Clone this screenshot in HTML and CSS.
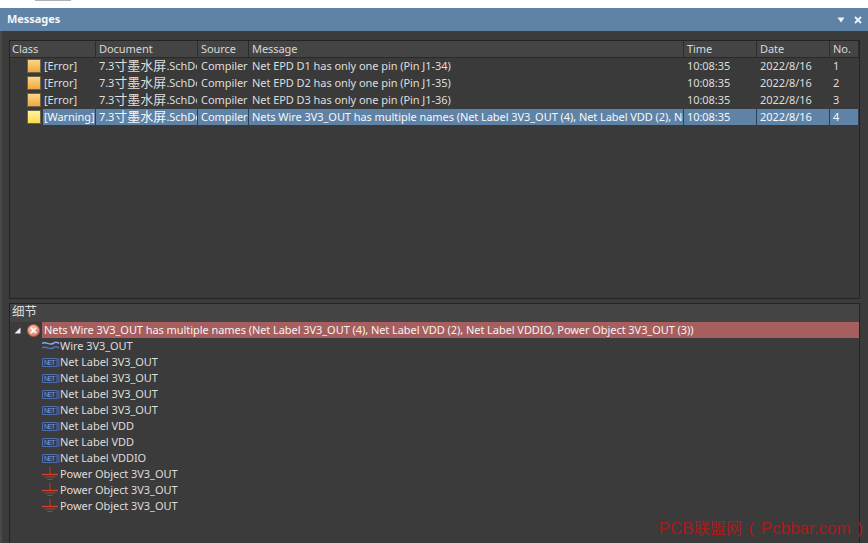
FILE: index.html
```html
<!DOCTYPE html>
<html lang="zh">
<head>
<meta charset="utf-8">
<title>Messages</title>
<link rel="stylesheet" href="styles.css">
</head>
<body>
<div class="topstrip"><i class="scrap"></i></div>
<header class="titlebar">
  <span class="title">Messages</span>
  <span class="win-btns">
    <svg width="8" height="6" viewBox="0 0 8 6"><path d="M0.5 0.5H7.5L4 5.5Z" fill="#f2f5f8"/></svg>
    <svg width="8" height="8" viewBox="0 0 8 8"><path d="M1 1L7 7M7 1L1 7" stroke="#f2f5f8" stroke-width="1.8"/></svg>
  </span>
</header>
<main class="body">
  <section class="msgs">
    <div class="row head">
      <div class="c">Class</div><div class="c">Document</div><div class="c">Source</div><div class="c">Message</div><div class="c">Time</div><div class="c">Date</div><div class="c">No.</div>
    </div>
    <div class="row">
      <div class="c cls"><i class="sq err"></i><span class="lab">[Error]</span></div><div class="c">7.3<span class="cjk">寸墨水屏</span>.SchDoc</div><div class="c">Compiler</div><div class="c">Net EPD D1 has only one pin (Pin J1-34)</div><div class="c">10:08:35</div><div class="c">2022/8/16</div><div class="c">1</div>
    </div>
    <div class="row">
      <div class="c cls"><i class="sq err"></i><span class="lab">[Error]</span></div><div class="c">7.3<span class="cjk">寸墨水屏</span>.SchDoc</div><div class="c">Compiler</div><div class="c">Net EPD D2 has only one pin (Pin J1-35)</div><div class="c">10:08:35</div><div class="c">2022/8/16</div><div class="c">2</div>
    </div>
    <div class="row">
      <div class="c cls"><i class="sq err"></i><span class="lab">[Error]</span></div><div class="c">7.3<span class="cjk">寸墨水屏</span>.SchDoc</div><div class="c">Compiler</div><div class="c">Net EPD D3 has only one pin (Pin J1-36)</div><div class="c">10:08:35</div><div class="c">2022/8/16</div><div class="c">3</div>
    </div>
    <div class="row sel">
      <div class="c cls"><i class="sq warn"></i><span class="lab">[Warning]</span></div><div class="c">7.3<span class="cjk">寸墨水屏</span>.SchDoc</div><div class="c">Compiler</div><div class="c">Nets Wire 3V3_OUT has multiple names (Net Label 3V3_OUT (4), Net Label VDD (2), Net Label VDDIO, Power Object 3V3_OUT (3))</div><div class="c">10:08:35</div><div class="c">2022/8/16</div><div class="c">4</div>
    </div>
  </section>
  <section class="details">
    <div class="dhead">细节</div>
    <div class="droot">
      <svg class="tw" width="7" height="7" viewBox="0 0 7 7"><path d="M6.5 0.5V6.5H0.5Z" fill="#f0f0f0"/></svg>
      <svg class="erric" width="13" height="13" viewBox="0 0 13 13"><defs><radialGradient id="eg" cx=".4" cy=".35" r=".7"><stop offset="0" stop-color="#f8c8b4"/><stop offset="1" stop-color="#d8705c"/></radialGradient></defs><circle cx="6.5" cy="6.5" r="6.1" fill="url(#eg)" stroke="#a8503f" stroke-width=".8"/><path d="M3.8 3.8L9.2 9.2M9.2 3.8L3.8 9.2" stroke="#fff" stroke-width="1.5"/></svg>
      <span class="rootlabel">Nets Wire 3V3_OUT has multiple names (Net Label 3V3_OUT (4), Net Label VDD (2), Net Label VDDIO, Power Object 3V3_OUT (3))</span>
    </div>
    <ul class="tree">
      <li><svg width="18" height="12" viewBox="0 0 18 12"><path d="M0 3.5C4 0.5 7 6 11 3.5S15 2.5 17 3.5" fill="none" stroke="#88a8e4" stroke-width="1.5"/><path d="M0 8C4 5 7 10.5 11 8S15 7 17 8" fill="none" stroke="#4f72b8" stroke-width="1.5"/></svg>Wire 3V3_OUT</li>
      <li><svg width="18" height="12" viewBox="0 0 18 12"><use href="#netl"/></svg>Net Label 3V3_OUT</li>
      <li><svg width="18" height="12" viewBox="0 0 18 12"><use href="#netl"/></svg>Net Label 3V3_OUT</li>
      <li><svg width="18" height="12" viewBox="0 0 18 12"><use href="#netl"/></svg>Net Label 3V3_OUT</li>
      <li><svg width="18" height="12" viewBox="0 0 18 12"><use href="#netl"/></svg>Net Label 3V3_OUT</li>
      <li><svg width="18" height="12" viewBox="0 0 18 12"><use href="#netl"/></svg>Net Label VDD</li>
      <li><svg width="18" height="12" viewBox="0 0 18 12"><use href="#netl"/></svg>Net Label VDD</li>
      <li><svg width="18" height="12" viewBox="0 0 18 12"><use href="#netl"/></svg>Net Label VDDIO</li>
      <li><svg width="18" height="14" viewBox="0 0 18 14"><use href="#pwr"/></svg>Power Object 3V3_OUT</li>
      <li><svg width="18" height="14" viewBox="0 0 18 14"><use href="#pwr"/></svg>Power Object 3V3_OUT</li>
      <li><svg width="18" height="14" viewBox="0 0 18 14"><use href="#pwr"/></svg>Power Object 3V3_OUT</li>
    </ul>
  </section>
  <div class="wm">PCB<span class="wmcjk">联盟网</span> ( Pcbbar.com )</div>
</main>
<svg class="defs" width="0" height="0">
  <defs>
    <g id="netl"><path d="M0.5 2.5H15V10.5H0.5Z M16.8 2V11" fill="none" stroke="#4f6fb4"/><text x="2" y="9" font-family="Liberation Sans, sans-serif" font-size="7" fill="#7a98d4" textLength="11.5">NET</text></g>
    <g id="pwr"><path d="M8 0V7" stroke="#b83a2a" stroke-width="1.2"/><path d="M0 7.5H16" stroke="#cc3f2b" stroke-width="1.4"/><path d="M3 10H13M5.5 12.5H10.5" stroke="#b83a2a" stroke-width="1.2"/></g>
  </defs>
</svg>
</body>
</html>
```
FILE: styles.css
```css
* { box-sizing: border-box; }
html, body { margin: 0; padding: 0; }
body {
  width: 868px; height: 543px; overflow: hidden;
  background: #3b3b3b; color: #dedede;
  font: 11px/16px "Noto Sans", "Noto Sans CJK SC", sans-serif;
  letter-spacing: -0.06px;
  display: flex; flex-direction: column;
}
.topstrip { height: 8px; background: #fff; flex: none; position: relative; }
.scrap { position: absolute; left: 35px; top: 0; width: 36px; height: 1px; background: #b0b0b0; }
.titlebar {
  height: 23px; flex: none; background: #5f83a6;
  display: flex; align-items: center; justify-content: space-between;
  padding: 0 6px 2px 7px;
  color: #f4f6f8; font-weight: 700; font-size: 11px;
}
.win-btns { display: flex; align-items: center; gap: 9px; padding-top: 2px; }
.body {
  flex: 1; padding: 9px 8px 0 9px;
  display: flex; flex-direction: column; gap: 4px; min-height: 0; position: relative;
  background: linear-gradient(to right, #4a4a45 2px, #3b3b3b 2px);
}
.msgs { height: 259px; border: 1px solid #232323; flex: none; background: #3a3a3a; }
.row {
  display: grid; grid-template-columns: 86px 102px 51px 435px 73px 73px 1fr;
  height: 17px;
}
.row.head { background: #444; border-bottom: 1px solid #2a2a2a; color: #d8d8d8; }
.c { height: 16px; line-height: 16px; white-space: nowrap; overflow: hidden; padding-left: 3px; border-right: 1px solid #3c3c3c; }
.row.head .c { border-right-color: #2c2c2c; }
.row.head .c:first-child { padding-left: 2px; }
.cjk { font-size: 13px; line-height: 1; letter-spacing: 0; }
.row.sel { color: #f6f8fa; }
.row.sel .c { background: #5f83a6; border-right-color: #2f4255; }
.row.sel .c.cls { background: none; }
.c.cls { display: flex; align-items: center; padding-left: 17px; overflow: hidden; }
.sq { width: 14px; height: 14px; flex: none; margin-right: 2px; border: 1px solid #6d6345; }
.lab { flex: 1; height: 16px; padding-left: 1px; }
.sel .lab { background: #5f83a6; }
.err { background: linear-gradient(#fdd68a, #f0a83e); }
.warn { background: linear-gradient(#fff3a0, #f6dc50); }
.details { flex: 1; border: 1px solid #232323; border-bottom: 0; min-height: 0; }
.dhead { height: 18px; line-height: 16px; background: #444; padding-left: 2px; font-size: 12.5px; letter-spacing: 0; color: #dcdcdc; }
.droot { height: 16px; display: flex; align-items: center; color: #f4f4f4; }
.tw { margin-left: 4px; flex: none; }
.erric { margin-left: 6px; flex: none; }
.rootlabel { flex: 1; background: #a65e5e; height: 16px; line-height: 15px; margin-left: 2px; padding-left: 2px; white-space: nowrap; }
.tree { list-style: none; margin: 0; padding: 0 0 0 32px; }
.tree li { height: 16px; display: flex; align-items: center; color: #dedede; }
.wm {
  position: absolute; right: 5px; bottom: 4px;
  color: #a81c1c; font: 17px/20px "Liberation Sans", "Noto Sans CJK SC", sans-serif;
  letter-spacing: 0; word-spacing: 2px; white-space: nowrap;
}
.wmcjk { font-size: 16px; }
.defs { position: absolute; }
```
